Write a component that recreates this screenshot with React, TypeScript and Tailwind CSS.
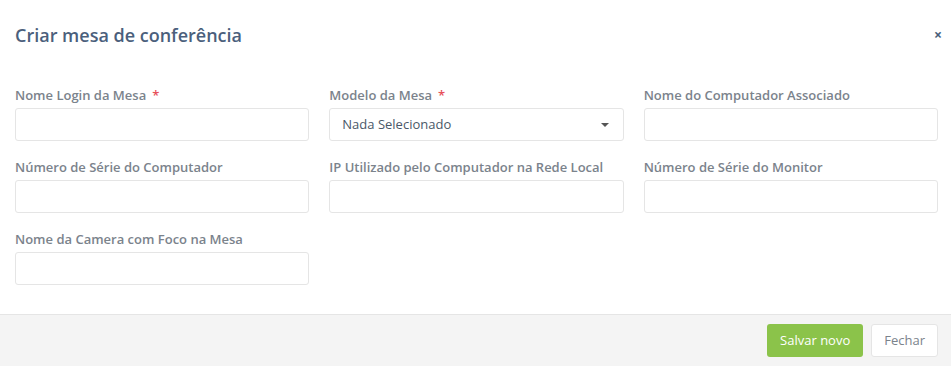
const fields = [
    { label: "Nome Login da Mesa", required: true },
    { label: "Modelo da Mesa", required: true, select: true },
    { label: "Nome do Computador Associado" },
    { label: "Número de Série do Computador" },
    { label: "IP Utilizado pelo Computador na Rede Local" },
    { label: "Número de Série do Monitor" },
    { label: "Nome da Camera com Foco na Mesa" }
];

const Field = ({ label, required, select }: { label: string; required?: boolean; select?: boolean }) => (
    <div className="flex flex-col">
        <label className="mb-[4px] text-[13px] leading-[18px] font-semibold text-[#7b838c]">
            {label}
            {required && <span className="ml-[6px] text-[#e7505a]">*</span>}
        </label>
        {select ? (
            <div className="flex h-[33px] items-center justify-between rounded-[3px] border border-[#e5e5e5] bg-white pr-[14px] pl-[12px]">
                <span className="text-[13px] text-[#4a5868]">Nada Selecionado</span>
                <span className="h-0 w-0 border-x-[4px] border-t-[4px] border-x-transparent border-t-[#555]" />
            </div>
        ) : (
            <input className="h-[33px] rounded-[3px] border border-[#e5e5e5] bg-white px-3 text-[13px] outline-none" />
        )}
    </div>
);

export default function App() {
    return (
        <div className="flex h-[366px] w-[951px] flex-col bg-white font-['Open_Sans',sans-serif]">
            <div className="flex h-[70px] items-center justify-between pr-[9px] pl-[15px]">
                <h4 className="text-[18px] font-semibold text-[#4b5f7c]">Criar mesa de conferência</h4>
                <span className="text-[14px] leading-none font-bold text-[#4b5f7c]">×</span>
            </div>
            <div className="grid grid-cols-3 gap-x-[20px] gap-y-[17px] pr-[13px] pb-[29px] pl-[15px] pt-[16px]">
                {fields.map((f) => (
                    <Field key={f.label} {...f} />
                ))}
            </div>
            <div className="flex flex-1 items-center justify-end gap-[8px] border-t border-[#e5e5e5] bg-[#f4f4f4] pr-[13px]">
                <button className="h-[33px] rounded-[3px] bg-[#8bc34a] px-[13px] text-[13px] text-white">Salvar novo</button>
                <button className="h-[33px] rounded-[3px] border border-[#e5e5e5] bg-white px-[12px] text-[13px] text-[#7b838c]">Fechar</button>
            </div>
        </div>
    );
}
